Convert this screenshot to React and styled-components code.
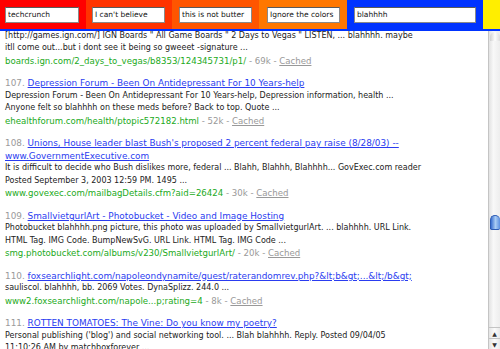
import styled, { createGlobalStyle } from "styled-components";

const GlobalStyle = createGlobalStyle`
  html, body {
    margin: 0;
    padding: 0;
    background: #ffffff;
    overflow: hidden;
  }
`;

const Page = styled.div`
  width: 500px;
  height: 349px;
  display: flex;
  flex-direction: column;
  overflow: hidden;
  font-family: "DejaVu Sans", Verdana, sans-serif;
`;

const Toolbar = styled.div`
  display: flex;
  height: 29px;
  flex-shrink: 0;
  border-bottom: 2px solid #0033ff;
  overflow: hidden;
`;

const Segment = styled.div`
  display: flex;
  align-items: center;
  flex-shrink: 0;
  box-sizing: border-box;
  width: ${(p) => p.$width}px;
  padding-left: ${(p) => p.$pad}px;
  background: ${(p) => p.$color};
`;

const SearchInput = styled.input`
  box-sizing: border-box;
  width: ${(p) => p.$width}px;
  height: 16px;
  margin: 0;
  padding: 0 2px;
  border: 1px solid #8a8a8a;
  border-top-color: #5a5a5a;
  background: #ffffff;
  color: #111;
  font-family: "DejaVu Sans", Verdana, sans-serif;
  font-size: 7.5px;
  outline: none;
`;

const Body = styled.div`
  flex: 1;
  display: flex;
  min-height: 0;
`;

const Results = styled.div`
  flex: 1;
  padding: 0 5px;
  margin-top: -1.5px;
  overflow: hidden;
`;

const Result = styled.div`
  margin-bottom: 10px;
`;

const Line = styled.div`
  white-space: nowrap;
  line-height: 12.5px;
`;

const Title = styled(Line)`
  font-size: 8.9px;
`;

const Num = styled.span`
  color: #9a9a9a;
`;

const TitleLink = styled.a`
  color: #2a3cf0;
  text-decoration: underline;
`;

const Snippet = styled(Line)`
  font-size: 8px;
  color: #222;
`;

const UrlLine = styled(Line)`
  font-size: 8.6px;
  color: #999;
`;

const Url = styled.span`
  color: #22aa22;
`;

const Cached = styled.a`
  color: #999;
  text-decoration: underline;
`;

const Scrollbar = styled.div`
  width: 11px;
  flex-shrink: 0;
  display: flex;
  flex-direction: column;
  border-left: 1px solid #c4c4c4;
  background: linear-gradient(to right, #e2e2e2, #f8f8f8 40%, #ededed);
`;

const ScrollCap = styled.div`
  height: 9px;
  margin: 1px 0 0 1px;
  border-radius: 6px 6px 0 0;
  background: linear-gradient(to right, #d0d0d0, #fdfdfd 50%, #dcdcdc);
`;

const Track = styled.div`
  flex: 1;
`;

const Thumb = styled.div`
  height: 13px;
  margin: 174px 0 0 1px;
  border-radius: 6px 6px 2px 2px;
  background: linear-gradient(to right, #3a6fd0, #a9ccf4 50%, #5b8fe0);
  border: 1px solid #2d5cb5;
  border-right: none;
`;

const Arrow = styled.div`
  height: 10px;
  display: flex;
  align-items: center;
  justify-content: center;
  border-top: 1px solid #c4c4c4;
  font-size: 6px;
  color: #333;
  background: linear-gradient(to right, #e4e4e4, #fbfbfb 50%, #e8e8e8);
`;

const inputs = [
  { color: "#ff0000", width: 86, pad: 5, input: 74, value: "techcrunch" },
  { color: "#ff3300", width: 86, pad: 6, input: 73, value: "I can't believe" },
  { color: "#ff5500", width: 87, pad: 7, input: 73, value: "this is not butter" },
  { color: "#ff7700", width: 88, pad: 8, input: 73, value: "Ignore the colors" },
  { color: "#0033ff", width: 136, pad: 7, input: 122, value: "blahhhh" },
];

const results = [
  {
    snippet: [
      "[http://games.ign.com/] IGN Boards \" All Game Boards \" 2 Days to Vegas \" LISTEN, ... blahhhh. maybe",
      "itll come out...but i dont see it being so gweeet -signature ...",
    ],
    url: "boards.ign.com/2_days_to_vegas/b8353/124345731/p1/",
    size: "69k",
  },
  {
    num: "107.",
    title: ["Depression Forum - Been On Antidepressant For 10 Years-help"],
    snippet: [
      "Depression Forum - Been On Antidepressant For 10 Years-help, Depression information, health ...",
      "Anyone felt so blahhhh on these meds before? Back to top. Quote ...",
    ],
    url: "ehealthforum.com/health/ptopic572182.html",
    size: "52k",
  },
  {
    num: "108.",
    title: [
      "Unions, House leader blast Bush's proposed 2 percent federal pay raise (8/28/03) --",
      "www.GovernmentExecutive.com",
    ],
    snippet: [
      "It is difficult to decide who Bush dislikes more, federal ... Blahh, Blahhh, Blahhhh... GovExec.com reader",
      "Posted September 3, 2003 12:59 PM. 1495 ...",
    ],
    url: "www.govexec.com/mailbagDetails.cfm?aid=26424",
    size: "30k",
  },
  {
    num: "109.",
    title: ["SmallvietgurlArt - Photobucket - Video and Image Hosting"],
    snippet: [
      "Photobucket blahhhh.png picture, this photo was uploaded by SmallvietgurlArt. ... blahhhh. URL Link.",
      "HTML Tag. IMG Code. BumpNewSvG. URL Link. HTML Tag. IMG Code ...",
    ],
    url: "smg.photobucket.com/albums/v230/SmallvietgurlArt/",
    size: "20k",
  },
  {
    num: "110.",
    title: [
      "foxsearchlight.com/napoleondynamite/guest/raterandomrev.php?&lt;b&gt;...&lt;/b&gt;",
    ],
    snippet: ["sauliscol. blahhhh, bb. 2069 Votes. DynaSplizz. 244.0 ..."],
    url: "www2.foxsearchlight.com/napole...p;rating=4",
    size: "8k",
  },
  {
    num: "111.",
    title: ["ROTTEN TOMATOES: The Vine: Do you know my poetry?"],
    snippet: [
      "Personal publishing ('blog') and social networking tool. ... Blah blahhhh. Reply. Posted 09/04/05",
      "11:10:26 AM by matchboxforever ...",
    ],
  },
];

export default function App() {
  return (
    <Page>
      <GlobalStyle />
      <Toolbar>
        {inputs.map((s) => (
          <Segment key={s.value} $color={s.color} $width={s.width} $pad={s.pad}>
            <SearchInput readOnly defaultValue={s.value} $width={s.input} />
          </Segment>
        ))}
        <Segment $color="#ffee00" $width={40} $pad={0} />
      </Toolbar>
      <Body>
        <Results>
          {results.map((r, i) => (
            <Result key={i}>
              {r.title &&
                r.title.map((t, j) => (
                  <Title key={t}>
                    {j === 0 && <Num>{r.num} </Num>}
                    <TitleLink href="#">{t}</TitleLink>
                  </Title>
                ))}
              {r.snippet.map((line) => (
                <Snippet key={line}>{line}</Snippet>
              ))}
              {r.url && (
                <UrlLine>
                  <Url>{r.url}</Url> - {r.size} - <Cached href="#">Cached</Cached>
                </UrlLine>
              )}
            </Result>
          ))}
        </Results>
        <Scrollbar>
          <ScrollCap />
          <Track>
            <Thumb />
          </Track>
          <Arrow>▲</Arrow>
          <Arrow>▼</Arrow>
        </Scrollbar>
      </Body>
    </Page>
  );
}
